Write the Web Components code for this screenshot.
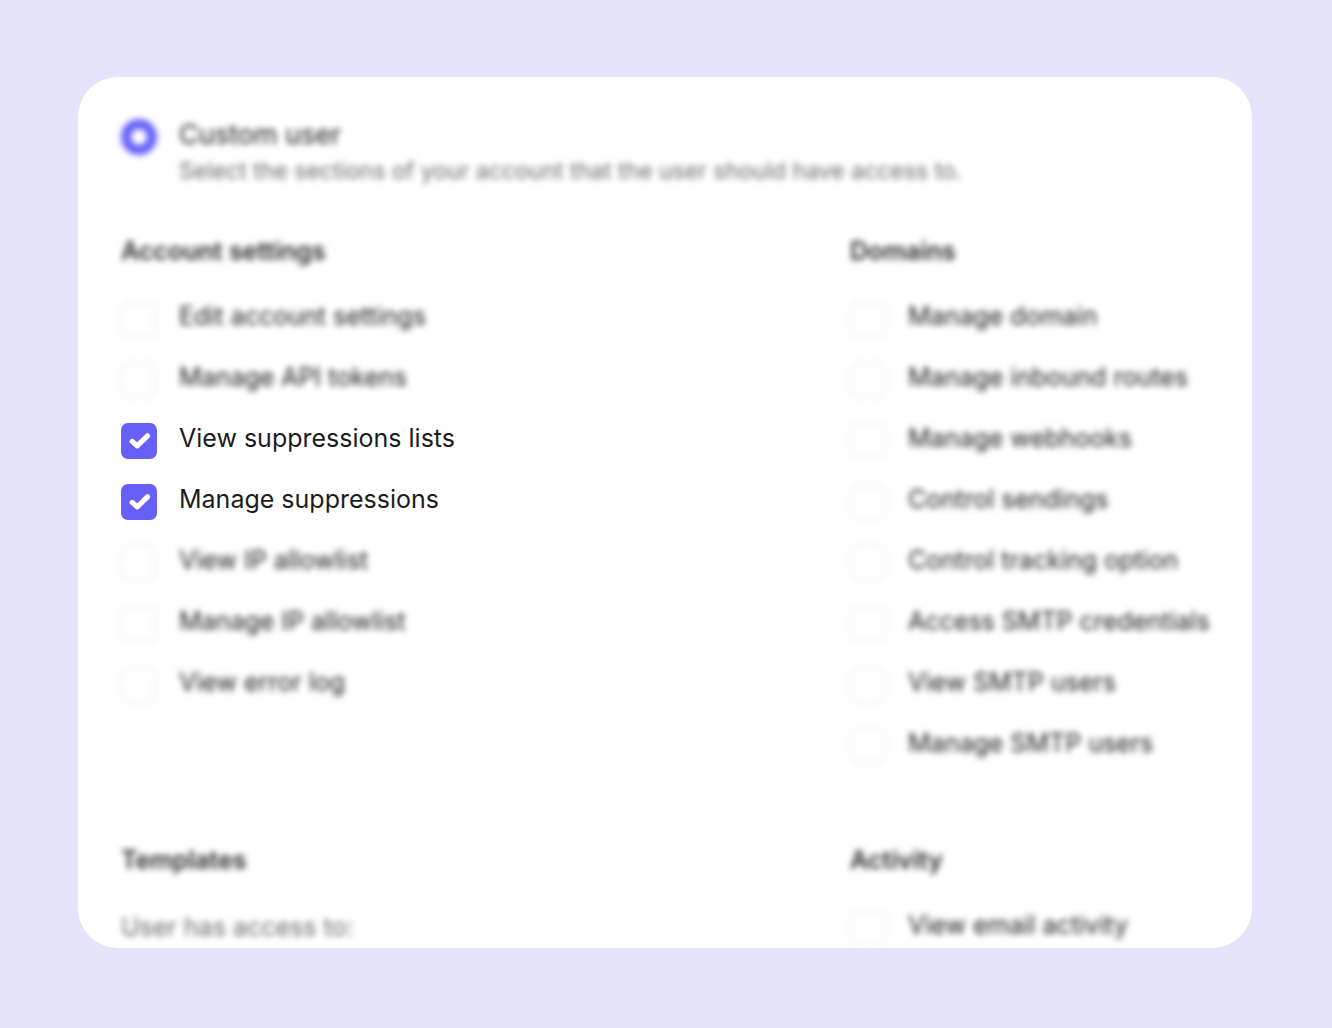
<!DOCTYPE html>
<html lang="en">
<head>
<meta charset="utf-8">
<meta name="viewport" content="width=device-width, initial-scale=1">
<title>User permissions</title>
<style>
  body {
    margin: 0;
    background: #e6e4fa;
    font-family: Inter, "Liberation Sans", sans-serif;
    font-size: 25px;
    line-height: 30px;
    color: #1c1c1e;
    --accent: #675ff8;
    --muted: #68686a;
    --soft: blur(3px);
  }
</style>
</head>
<body>
<permissions-page>
  <role-option name="Custom user" hint="Select the sections of your account that the user should have access to."></role-option>
  <permission-grid>
    <permission-group heading="Account settings">
      <permission-item label="Edit account settings"></permission-item>
      <permission-item label="Manage API tokens"></permission-item>
      <permission-item label="View suppressions lists" checked></permission-item>
      <permission-item label="Manage suppressions" checked></permission-item>
      <permission-item label="View IP allowlist"></permission-item>
      <permission-item label="Manage IP allowlist"></permission-item>
      <permission-item label="View error log"></permission-item>
    </permission-group>
    <permission-group heading="Domains">
      <permission-item label="Manage domain"></permission-item>
      <permission-item label="Manage inbound routes"></permission-item>
      <permission-item label="Manage webhooks"></permission-item>
      <permission-item label="Control sendings"></permission-item>
      <permission-item label="Control tracking option"></permission-item>
      <permission-item label="Access SMTP credentials"></permission-item>
      <permission-item label="View SMTP users"></permission-item>
      <permission-item label="Manage SMTP users"></permission-item>
    </permission-group>
    <permission-group heading="Templates">
      <group-note>User has access to:</group-note>
    </permission-group>
    <permission-group heading="Activity">
      <permission-item label="View email activity"></permission-item>
    </permission-group>
  </permission-grid>
</permissions-page>
<script>
  class BaseElement extends HTMLElement {
    mount(html) {
      if (!this.shadowRoot) this.attachShadow({ mode: "open" }).innerHTML = html;
    }
  }

  customElements.define("permissions-page", class extends BaseElement {
    connectedCallback() {
      this.mount(`
        <style>
          :host { display: flex; box-sizing: border-box; height: 100vh; padding: 77px 80px 80px 78px; }
          main { flex: 1; box-sizing: border-box; min-width: 0; overflow: hidden; padding: 42px 41px 0 43px; border-radius: 40px; background: #fff; }
        </style>
        <main><slot></slot></main>`);
    }
  });

  customElements.define("role-option", class extends BaseElement {
    connectedCallback() {
      this.mount(`
        <style>
          :host { display: flex; gap: 22px; margin-bottom: 50px; filter: var(--soft); }
          input { appearance: none; flex: none; box-sizing: border-box; width: 36px; height: 36px; margin: 0; border: 10px solid var(--accent); border-radius: 50%; background: #fff; }
          .text { display: flex; flex-direction: column; gap: 5px; }
          label { font-size: 27px; line-height: 32px; }
          p { margin: 0; font-size: 23px; color: var(--muted); }
        </style>
        <input type="radio" id="role" name="role" aria-describedby="hint" checked>
        <div class="text">
          <label for="role">${this.getAttribute("name")}</label>
          <p id="hint">${this.getAttribute("hint")}</p>
        </div>`);
    }
  });

  customElements.define("permission-grid", class extends BaseElement {
    connectedCallback() {
      this.mount(`
        <style>
          :host { display: grid; grid-template-columns: minmax(0, 1fr) 361px; row-gap: 81px; }
        </style>
        <slot></slot>`);
    }
  });

  customElements.define("permission-group", class extends BaseElement {
    connectedCallback() {
      this.mount(`
        <style>
          :host { display: block; }
          h2 { margin: 0 0 35px; font-size: 25px; line-height: 30px; font-weight: 600; color: #2a2a2c; filter: var(--soft); }
          .items { display: flex; flex-direction: column; gap: 25px; }
        </style>
        <h2>${this.getAttribute("heading")}</h2>
        <div class="items"><slot></slot></div>`);
    }
  });

  customElements.define("permission-item", class extends BaseElement {
    connectedCallback() {
      this.mount(`
        <style>
          :host { display: flex; gap: 22px; white-space: nowrap; filter: var(--soft); }
          :host([checked]) { filter: none; }
          .box { display: grid; flex: none; width: 36px; height: 36px; }
          .box > * { grid-area: 1 / 1; }
          input { appearance: none; box-sizing: border-box; width: 36px; height: 36px; margin: 0; border: 2px solid #f0f0f1; border-radius: 7px; background: #fff; }
          input:checked { border: 0; background: var(--accent); }
          svg { display: none; pointer-events: none; }
          input:checked + svg { display: block; }
        </style>
        <span class="box">
          <input type="checkbox" id="box" ${this.hasAttribute("checked") ? "checked" : ""}>
          <svg width="36" height="36" viewBox="0 0 36 36" fill="none" stroke="#fff" stroke-width="5.2" stroke-linecap="round" stroke-linejoin="round" aria-hidden="true"><path d="M11.2 18.4 16.2 22.8 26.5 12.8"/></svg>
        </span>
        <label for="box">${this.getAttribute("label")}</label>`);
    }
  });

  customElements.define("group-note", class extends BaseElement {
    connectedCallback() {
      this.mount(`
        <style>
          :host { display: block; line-height: 34px; color: var(--muted); filter: var(--soft); }
        </style>
        <slot></slot>`);
    }
  });
</script>
</body>
</html>
